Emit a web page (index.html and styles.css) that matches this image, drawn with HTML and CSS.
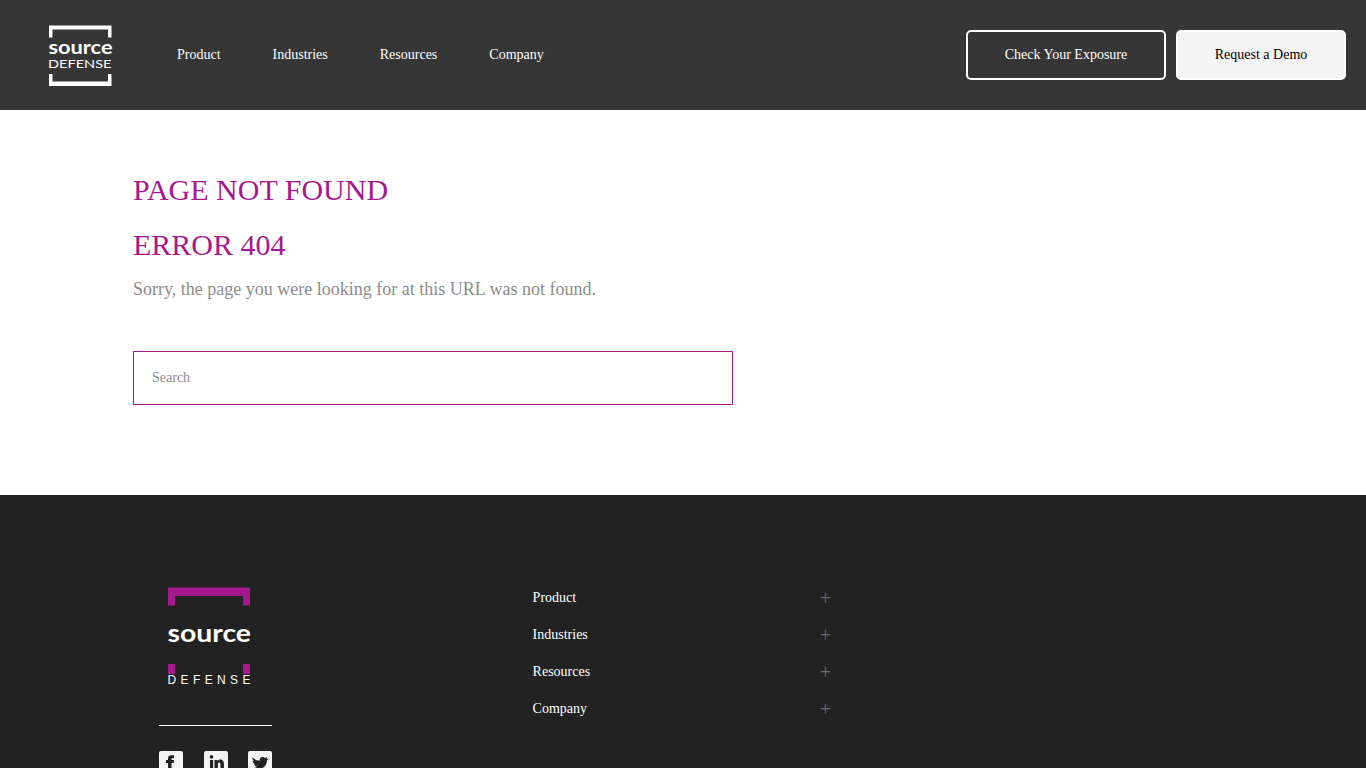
FILE: index.html
```html
<!DOCTYPE html>
<html lang="en">
<head>
<meta charset="utf-8">
<title>Page not found - Source Defense</title>
<link rel="stylesheet" href="styles.css">
</head>
<body>
<header class="header">
  <a class="brand" href="#">
    <svg width="66" height="64" viewBox="0 0 66 64" aria-label="Source Defense">
      <path fill="#fff" d="M1 1.500H63.500V13.500H60V5.500H4.500V13.500H1ZM1 50H4.500V57.500H60V50H63.500V62H1Z"/>
      <text class="logo-source" x="0.500" y="30" font-size="19.500" textLength="64" lengthAdjust="spacingAndGlyphs">source</text>
      <text class="logo-defense" x="0" y="43.500" font-size="11.500" textLength="63.500" lengthAdjust="spacingAndGlyphs">DEFENSE</text>
    </svg>
  </a>
  <nav class="nav">
    <a href="#">Product</a>
    <a href="#">Industries</a>
    <a href="#">Resources</a>
    <a href="#">Company</a>
  </nav>
  <div class="actions">
    <a class="button button-outline" href="#">Check Your Exposure</a>
    <a class="button button-solid" href="#">Request a Demo</a>
  </div>
</header>

<main class="content">
  <h1 class="title">PAGE NOT FOUND</h1>
  <h2 class="title">ERROR 404</h2>
  <p class="message">Sorry, the page you were looking for at this URL was not found.</p>
  <input class="search" type="text" placeholder="Search">
</main>

<footer class="footer">
  <div class="footer-brand">
    <svg class="footer-logo" width="84" height="99" viewBox="0 0 84 99" aria-label="Source Defense">
      <path class="purple" d="M1 .5H83V18.500H76V9H8V18.500H1ZM1 77H8V87H1ZM76 77H83V87H76Z"/>
      <text class="logo-source" x="0.500" y="54.800" font-size="24.500" textLength="83.500" lengthAdjust="spacingAndGlyphs">source</text>
      <text class="logo-letters" x="0.500" y="97" font-size="12" textLength="83">DEFENSE</text>
    </svg>
    <div class="social">
      <a href="#" aria-label="Facebook"><svg width="24" height="24" viewBox="0 0 24 24"><rect width="24" height="24" rx="2" fill="#f4f4f4"/><path fill="#222" d="M9 20V12H7V9H9V7.500C9 5.300 10.300 4.300 12.300 4.300H15V7.300H13.500C12.700 7.300 12.500 7.700 12.500 8.300V9H15L14.700 12H12.500V20Z"/></svg></a>
      <a href="#" aria-label="LinkedIn"><svg width="24" height="24" viewBox="0 0 24 24"><rect width="24" height="24" rx="2" fill="#f4f4f4"/><circle cx="7.500" cy="5.900" r="1.800" fill="#222"/><path fill="#222" d="M6 9H9.200V19H6ZM10.500 9H13.500V10.200C14.100 9.200 15 8.600 16.200 8.600C18.800 8.600 19.900 10.400 19.900 13V19H16.400V13.700C16.400 12.300 16.100 11.500 15.200 11.500C14.300 11.500 13.900 12.200 13.900 13.500V19H10.500Z"/></svg></a>
      <a href="#" aria-label="Twitter"><svg width="24" height="24" viewBox="0 0 24 24"><rect width="24" height="24" rx="2" fill="#f4f4f4"/><path fill="#222" d="M4.500 6.200C6.200 8.300 8.800 9.600 11.700 9.700C11 6.600 14.800 4.600 17.100 6.900L19.300 6.100L18.500 7.900L21 7.500L18.900 9.500C19.200 15.500 12.500 20.500 4.500 17C6.500 17.200 8 16.700 9.200 15.700C7.700 15.600 6.500 14.700 6 13.300H7.500C5.800 12.700 4.700 11.500 4.700 9.700L6.200 10.100C4.600 8.900 4.200 7.600 4.500 6.200Z"/></svg></a>
    </div>
  </div>
  <nav class="footer-nav">
    <a href="#">Product<span class="plus">+</span></a>
    <a href="#">Industries<span class="plus">+</span></a>
    <a href="#">Resources<span class="plus">+</span></a>
    <a href="#">Company<span class="plus">+</span></a>
  </nav>
</footer>
</body>
</html>
```
FILE: styles.css
```css
* { box-sizing: border-box; }

body {
  margin: 0;
  height: 100vh;
  overflow: hidden;
  background: #fff;
  font-family: "Liberation Serif", serif;
  font-size: 14px;
}

a { color: inherit; text-decoration: none; }
svg { display: block; overflow: visible; }

.header {
  display: flex;
  align-items: center;
  height: 110px;
  padding: 0 20px 0 48px;
  background: #363636;
  color: #fff;
}

.brand { width: 129px; padding-top: 1px; }

.nav { display: flex; gap: 52px; line-height: 20px; }

.actions { display: flex; gap: 10px; margin-left: auto; }

.button {
  height: 50px;
  border: 2px solid #fff;
  border-radius: 5px;
  line-height: 46px;
  text-align: center;
}
.button-outline { width: 200px; }
.button-solid { width: 170px; background: #f4f4f4; color: #000; }

.logo-source { fill: #fff; font-family: Lato, sans-serif; font-weight: 700; }
.logo-defense { fill: #fff; font-family: Lato, sans-serif; }
.logo-letters { fill: #fff; font-family: "Liberation Sans", sans-serif; }

.content { height: 385px; padding: 60px 133px 0; }

.title {
  margin: 0 0 15px;
  color: #a6198c;
  font-size: 30px;
  font-weight: 400;
  line-height: 40px;
}

.message {
  margin: -4px 0 49px;
  color: #8c8c8c;
  font-size: 18px;
  line-height: 26px;
}

.search {
  display: block;
  width: 600px;
  height: 54px;
  padding: 0 18px;
  border: 1px solid #a6198c;
  background: #fff;
  font: inherit;
}
.search::placeholder { color: #8c8c8c; }

.footer {
  display: flex;
  height: 273px;
  padding: 92px 133px 0 159px;
  overflow: hidden;
  background: #222;
  color: #fff;
}

.footer-brand { width: 113px; }
.footer-logo { margin: 0 0 39px 8px; }
.purple { fill: #a6198c; }

.social {
  display: flex;
  justify-content: space-between;
  padding-top: 25px;
  border-top: 1px solid #fff;
}

.footer-nav { width: 298.5px; margin-left: 260.6px; padding-top: 1px; }
.footer-nav a {
  display: flex;
  align-items: center;
  justify-content: space-between;
  height: 20px;
  margin-bottom: 17px;
}

.plus {
  color: #6a6a6a;
  font-size: 20px;
  line-height: 20px;
}
```
